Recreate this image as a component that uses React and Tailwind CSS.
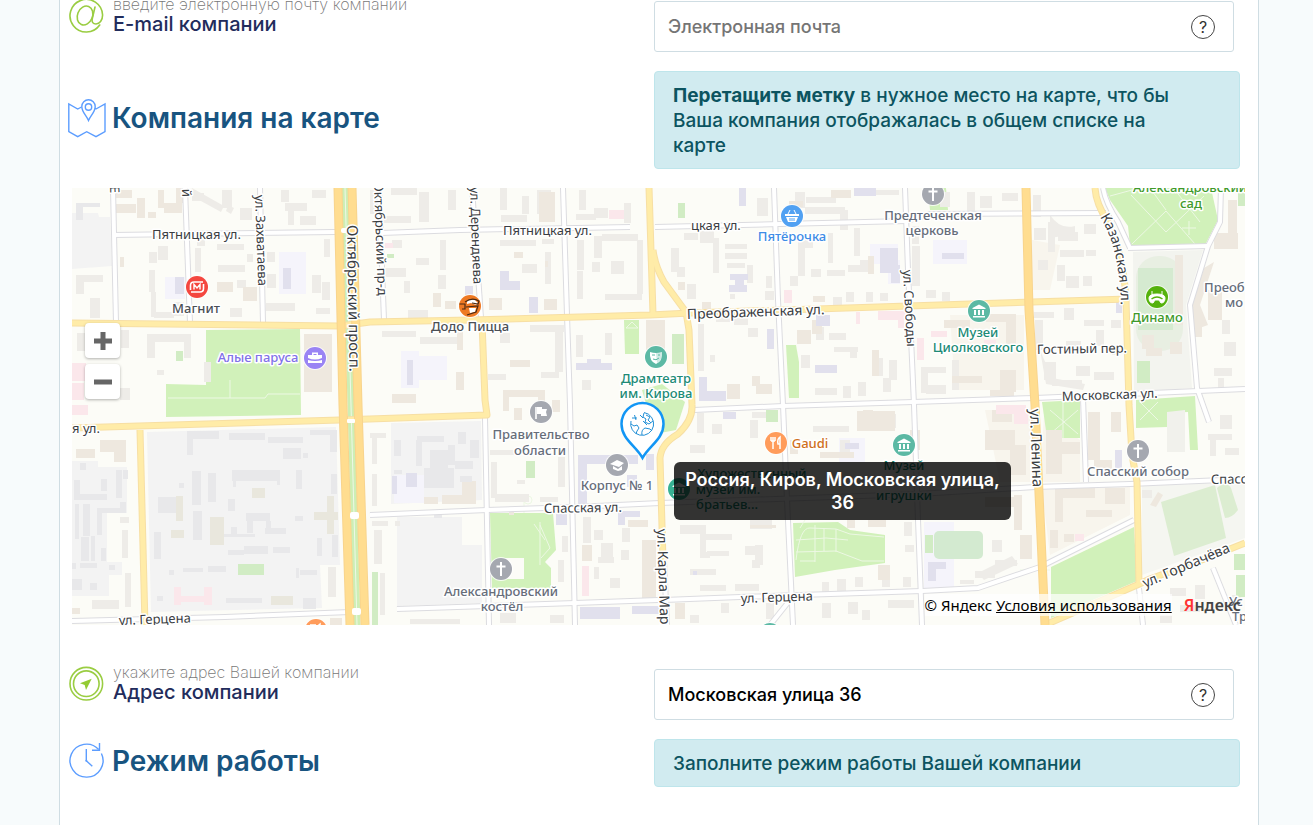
import { useState } from 'react';

// [x, y, width, height]
const greyBuildings = [
    [192, 193, 12, 8], [222, 190, 10, 18], [240, 208, 12, 12], [281, 190, 8, 12], [285, 203, 22, 8], [288, 211, 6, 14], [300, 216, 16, 9], [312, 190, 14, 8],
    [149, 252, 8, 11], [158, 246, 10, 14], [149, 270, 6, 22], [151, 292, 5, 25], [154, 312, 20, 6], [174, 302, 10, 14], [197, 234, 8, 12], [195, 248, 6, 24],
    [217, 244, 27, 6], [218, 265, 27, 7], [237, 280, 9, 8], [76, 275, 27, 7], [76, 282, 8, 12], [90, 298, 10, 20], [247, 254, 6, 8], [267, 252, 8, 10],
    [267, 274, 9, 14], [312, 275, 9, 18], [322, 282, 8, 18], [324, 239, 6, 18], [266, 303, 29, 8], [316, 308, 14, 6], [230, 308, 12, 9], [147, 334, 44, 8],
    [147, 336, 8, 22], [184, 336, 7, 22], [121, 330, 8, 18], [157, 370, 7, 5], [204, 362, 7, 20], [120, 388, 10, 12], [77, 333, 14, 18],
    [370, 190, 9, 24], [391, 188, 26, 7], [377, 216, 34, 7], [419, 192, 10, 30], [448, 190, 8, 20], [500, 188, 7, 22], [501, 215, 26, 7], [522, 196, 7, 18],
    [537, 190, 14, 24], [579, 190, 7, 20], [576, 214, 20, 6], [624, 203, 7, 20], [594, 208, 14, 10], [381, 268, 25, 9], [392, 240, 10, 8], [404, 281, 6, 12],
    [416, 258, 13, 7], [440, 240, 6, 30], [438, 275, 8, 14], [500, 240, 36, 6], [542, 239, 12, 5], [545, 252, 6, 32], [522, 264, 15, 9], [502, 284, 6, 5],
    [577, 240, 7, 30], [577, 271, 6, 28], [594, 236, 8, 22], [602, 234, 36, 7], [637, 240, 6, 54], [605, 294, 37, 6], [611, 261, 13, 13], [592, 262, 8, 10],
    [408, 310, 20, 8], [420, 337, 37, 7], [382, 331, 34, 6], [500, 333, 10, 10], [530, 325, 34, 7], [555, 330, 8, 42], [541, 372, 18, 6], [576, 335, 7, 22],
    [605, 333, 7, 22], [488, 374, 18, 6], [582, 380, 9, 10], [757, 198, 11, 18], [795, 192, 10, 16], [805, 207, 40, 7], [806, 197, 30, 6],
    [840, 210, 8, 20], [874, 190, 25, 5], [684, 233, 14, 7], [700, 231, 14, 12], [713, 238, 6, 35], [725, 244, 22, 5], [725, 253, 22, 6], [727, 263, 18, 5],
    [747, 265, 6, 18], [730, 294, 5, 5], [671, 248, 8, 24], [677, 267, 8, 10], [687, 284, 9, 15], [766, 276, 6, 12], [765, 291, 9, 9], [798, 241, 7, 35],
    [805, 240, 8, 8], [828, 233, 5, 30], [854, 228, 6, 28], [860, 260, 12, 9], [827, 270, 18, 6], [848, 265, 20, 7], [811, 269, 10, 8], [790, 276, 8, 10],
    [833, 297, 9, 9], [846, 292, 8, 10], [866, 292, 7, 10], [880, 293, 8, 8], [912, 226, 7, 18], [912, 246, 8, 40], [926, 290, 10, 8], [942, 292, 8, 9],
    [698, 324, 6, 47], [716, 314, 14, 8], [734, 318, 14, 7], [748, 328, 10, 9], [710, 355, 5, 7], [801, 355, 9, 13], [816, 327, 8, 13], [829, 333, 17, 7],
    [834, 347, 24, 5], [850, 352, 7, 6], [876, 358, 7, 18], [889, 360, 8, 20], [815, 388, 22, 7], [843, 386, 8, 12], [858, 382, 8, 14], [883, 378, 8, 14],
    [921, 367, 7, 26], [926, 367, 20, 6], [926, 385, 20, 9], [952, 360, 7, 30], [967, 192, 8, 20], [980, 196, 12, 12], [1002, 193, 16, 8], [940, 192, 10, 15],
    [1033, 195, 8, 22], [1034, 228, 12, 12], [1048, 222, 7, 30], [1058, 232, 20, 9], [1060, 250, 24, 7], [1084, 224, 12, 10], [1057, 265, 8, 16], [1083, 276, 9, 10],
    [1086, 250, 10, 6], [1038, 260, 10, 10], [1066, 276, 13, 12], [1034, 312, 20, 6], [1035, 320, 8, 30], [1064, 308, 10, 12], [1084, 320, 20, 6],
    [1096, 330, 8, 16], [1066, 341, 15, 12], [1111, 320, 10, 8], [1112, 345, 8, 10], [1044, 362, 12, 18], [1052, 380, 30, 6], [1076, 366, 14, 10], [1094, 372, 20, 8],
    [1214, 368, 18, 8], [1218, 378, 6, 14], [1224, 342, 12, 14], [1222, 320, 8, 14], [120, 517, 9, 6], [122, 530, 6, 28], [125, 573, 6, 34], [92, 600, 27, 9],
    [328, 567, 8, 30], [370, 433, 16, 5], [372, 436, 5, 28], [372, 474, 5, 32], [491, 462, 6, 36], [495, 494, 34, 8], [558, 457, 7, 30], [540, 497, 18, 5],
    [490, 450, 30, 5], [517, 480, 8, 4], [372, 521, 16, 5], [374, 530, 8, 34], [380, 573, 5, 42], [395, 521, 5, 5], [562, 536, 6, 16], [558, 560, 6, 22],
    [583, 517, 8, 26], [594, 530, 9, 10], [601, 543, 12, 14], [598, 557, 16, 6], [622, 528, 8, 14], [621, 550, 8, 10], [610, 578, 10, 10], [594, 567, 5, 12],
    [410, 619, 50, 5], [500, 613, 16, 10], [550, 615, 14, 8], [697, 413, 7, 20], [712, 424, 10, 10], [750, 420, 8, 18], [752, 412, 20, 6], [813, 426, 36, 6],
    [888, 414, 8, 14], [860, 414, 26, 6], [840, 440, 10, 14], [690, 445, 15, 8], [680, 525, 20, 9], [700, 525, 6, 30], [706, 534, 26, 6], [700, 552, 10, 6],
    [690, 569, 26, 6], [707, 551, 22, 5], [745, 546, 14, 9], [755, 545, 8, 20], [752, 560, 8, 8], [700, 585, 26, 6], [735, 584, 24, 7], [822, 582, 7, 11],
    [837, 579, 9, 14], [855, 577, 8, 10], [882, 577, 8, 10], [903, 577, 8, 10], [904, 522, 8, 14], [905, 545, 9, 7], [822, 603, 9, 15], [848, 602, 10, 12],
    [862, 610, 8, 10], [888, 600, 26, 8], [750, 520, 22, 9], [690, 615, 9, 8], [721, 603, 8, 10], [766, 603, 8, 16], [992, 540, 10, 12], [975, 571, 20, 7],
    [995, 560, 22, 6], [960, 580, 14, 4], [1208, 434, 24, 6], [1210, 440, 6, 16], [1225, 448, 14, 7], [1220, 415, 12, 14], [1150, 480, 12, 5], [1142, 490, 10, 8],
    [1150, 600, 14, 8], [1170, 588, 16, 8], [1195, 585, 10, 14], [1180, 605, 20, 7], [1160, 615, 12, 8], [1232, 595, 9, 10],
];

const tanBuildings = [
    [115, 190, 17, 8], [116, 204, 20, 9], [137, 198, 8, 20], [158, 190, 6, 18], [164, 203, 18, 10], [176, 188, 8, 15], [148, 212, 8, 6], [120, 257, 4, 10],
    [217, 282, 16, 10], [243, 287, 14, 14], [304, 334, 28, 58], [539, 192, 16, 30], [545, 261, 3, 6], [514, 252, 9, 6], [433, 293, 8, 14], [445, 301, 11, 8],
    [489, 298, 13, 12], [544, 299, 13, 11], [646, 320, 19, 33], [457, 320, 6, 30], [456, 372, 8, 18], [392, 394, 24, 9], [510, 360, 20, 7], [503, 390, 42, 7],
    [503, 397, 6, 14], [538, 397, 7, 14], [789, 201, 14, 6], [831, 190, 20, 8], [678, 282, 7, 8], [702, 302, 9, 7], [813, 296, 12, 6], [868, 256, 6, 18],
    [797, 330, 14, 14], [812, 320, 10, 14], [727, 384, 13, 15], [752, 376, 8, 10], [756, 384, 16, 10], [872, 350, 7, 26], [944, 320, 26, 8], [986, 314, 30, 8],
    [1006, 322, 10, 22], [952, 376, 30, 7], [1000, 370, 16, 22], [990, 390, 24, 6], [1175, 255, 8, 70], [1142, 335, 12, 14], [1146, 348, 16, 8], [1170, 342, 12, 12],
    [1214, 233, 24, 16], [1228, 200, 9, 40], [1208, 290, 14, 30], [1192, 315, 10, 22], [76, 449, 19, 9], [100, 440, 26, 12], [114, 446, 12, 16], [509, 510, 5, 5],
    [514, 408, 8, 12], [552, 400, 8, 12], [442, 495, 34, 9], [462, 481, 14, 15], [424, 497, 14, 7], [642, 540, 14, 60], [628, 520, 20, 7], [582, 545, 10, 16],
    [750, 525, 26, 3], [857, 411, 38, 20], [863, 410, 10, 10], [790, 440, 8, 14], [820, 452, 34, 6], [910, 430, 10, 20], [1046, 430, 16, 44], [1062, 442, 18, 12],
    [992, 410, 20, 12], [985, 430, 30, 20], [1010, 445, 16, 30], [1088, 412, 12, 48], [1094, 460, 18, 10], [1111, 412, 10, 20], [985, 497, 30, 10], [1014, 495, 8, 35],
    [1055, 488, 40, 10], [1055, 498, 8, 24], [1105, 488, 20, 16], [1050, 530, 8, 18], [1086, 510, 26, 7], [1064, 534, 10, 8], [1020, 535, 12, 24], [878, 565, 12, 15],
    [847, 520, 8, 8], [868, 520, 18, 7], [72, 608, 8, 6], [330, 618, 12, 7], [675, 603, 10, 16],
];

const darkBuildings = [
    [191, 431, 28, 8], [187, 431, 6, 24], [229, 433, 36, 7], [268, 437, 35, 6], [283, 448, 18, 11], [303, 453, 5, 5], [310, 430, 22, 5], [330, 430, 7, 22],
    [192, 471, 9, 34], [208, 473, 8, 29], [232, 470, 48, 11], [233, 481, 3, 6], [277, 481, 3, 4], [296, 470, 6, 19], [179, 483, 5, 5], [228, 499, 7, 12],
    [158, 497, 19, 16], [193, 511, 9, 29], [246, 513, 24, 8], [247, 521, 6, 12], [266, 521, 5, 12], [265, 528, 21, 6], [220, 534, 35, 3], [231, 527, 6, 9],
    [228, 550, 16, 5], [244, 546, 24, 8], [273, 547, 17, 6], [295, 516, 8, 5], [154, 532, 7, 27], [183, 568, 20, 4], [208, 566, 18, 6], [169, 570, 5, 5],
    [296, 568, 3, 10], [300, 570, 17, 5], [226, 598, 36, 5], [271, 596, 22, 9], [303, 598, 13, 11], [157, 596, 6, 5], [317, 538, 5, 18], [332, 535, 6, 22],
    [331, 474, 6, 20], [80, 463, 6, 7], [74, 480, 6, 20], [101, 479, 6, 12], [116, 470, 6, 28], [123, 470, 5, 9], [80, 494, 27, 6], [75, 504, 4, 35],
    [83, 504, 7, 32], [97, 510, 5, 25], [97, 508, 29, 5], [120, 502, 6, 9], [81, 537, 8, 24], [91, 536, 4, 25], [101, 548, 5, 13], [80, 563, 17, 5],
    [72, 579, 10, 11], [90, 583, 7, 7], [109, 565, 6, 5], [72, 563, 4, 6], [417, 436, 27, 6], [416, 440, 6, 26], [430, 450, 18, 26], [424, 468, 30, 20],
    [448, 445, 7, 20], [455, 461, 18, 8], [458, 432, 8, 12], [470, 440, 9, 18], [394, 440, 7, 16], [394, 470, 8, 4], [460, 476, 12, 6],
    [428, 510, 4, 4], [434, 512, 8, 6], [76, 203, 24, 4], [76, 206, 7, 14],
];

const oliveBuildings = [[176, 496, 7, 25], [171, 530, 13, 8], [210, 517, 14, 28], [252, 488, 13, 10], [314, 512, 24, 8], [327, 496, 7, 38], [271, 596, 22, 9]];
const lavenderZones = [[279, 252, 27, 42], [165, 277, 20, 22], [401, 351, 18, 37], [415, 356, 32, 24], [870, 244, 28, 20], [888, 260, 12, 24], [933, 240, 34, 24], [839, 438, 26, 24], [924, 522, 30, 66], [394, 475, 30, 28]];
const lavenderBuildings = [
    [283, 268, 8, 21], [175, 277, 9, 17], [739, 188, 7, 18], [854, 188, 22, 8], [500, 271, 9, 18], [500, 281, 20, 9], [465, 286, 8, 9], [529, 297, 9, 16],
    [407, 360, 6, 25], [576, 363, 36, 7], [587, 359, 14, 6], [730, 274, 18, 6], [735, 279, 9, 8], [729, 285, 18, 7], [880, 248, 18, 25], [891, 265, 9, 18],
    [942, 253, 22, 6], [816, 315, 14, 11], [767, 329, 7, 20], [815, 365, 22, 8], [699, 377, 8, 24], [700, 391, 26, 10], [1116, 302, 6, 11], [723, 412, 13, 7],
    [845, 443, 14, 6], [578, 456, 9, 50], [578, 455, 60, 9], [646, 454, 8, 16], [627, 475, 10, 12], [406, 473, 11, 14], [392, 476, 5, 18], [556, 514, 11, 11],
    [618, 511, 22, 6], [618, 516, 7, 9], [580, 607, 40, 12], [632, 606, 28, 8], [928, 562, 18, 7], [928, 568, 8, 13], [693, 571, 4, 4], [1115, 450, 7, 18],
];
const pinkBuildings = [[609, 210, 15, 9], [385, 243, 8, 5], [784, 290, 8, 13], [856, 312, 4, 12], [878, 311, 28, 9], [898, 318, 6, 10], [917, 338, 7, 22], [931, 331, 16, 6], [72, 363, 14, 18], [72, 383, 12, 17], [72, 405, 16, 10], [174, 587, 7, 18], [181, 596, 26, 6], [204, 587, 8, 18], [582, 566, 7, 30], [996, 405, 30, 9], [1014, 412, 14, 12], [1075, 534, 9, 7], [984, 340, 12, 6]];
const smallGreens = [[176, 351, 7, 10], [238, 564, 26, 11], [387, 254, 7, 4], [678, 203, 7, 15], [672, 334, 12, 30], [526, 461, 9, 17], [766, 410, 12, 12], [925, 535, 8, 18], [1137, 361, 13, 22], [1238, 188, 7, 18], [372, 572, 6, 53], [1234, 554, 11, 16], [1236, 575, 9, 22]];

const yellowRoads = [
    'M72 323L340 326L370 322L470 320L650 315L690 313L970 304L1128 299',
    'M72 428L105 427L340 420L487 415L485 400L482 322',
    'M140 430L145 625',
    'M649 188L653 314',
    'M653 250Q655 266 664 282L686 312L689 330L692 405Q693 420 678 434Q661 444 660 458L663 560',
    'M1095 188Q1096 204 1108 222Q1124 256 1126 300L1129 405L1132 455L1137 482L1139 585',
    'M1245 543L1210 557L1150 579L1137 585L1045 625',
];

const whiteRoads = [
    'M113 188L116 323', 'M185 188L190 323', 'M260 188L263 323', 'M113 235L335 232', 'M382 233L460 230L630 227', 'M655 227L780 224L907 221L930 214L1106 213',
    'M379 188L384 320', 'M472 188L481 318', 'M563 188L567 315L570 405L575 625', 'M774 188L778 300L783 405L787 500L793 625', 'M905 188L908 270L914 405L918 520L922 625',
    'M694 410L783 406L913 402L1035 398L1245 389', 'M370 515L487 510L575 507L660 503L918 494L1035 487L1130 484L1245 479', 'M72 621L225 617L350 612', 'M397 609L575 603L658 600',
    'M664 600L740 597L922 591L978 588L1040 567L1134 520', 'M485 418L487 522L489 625', 'M1083 398L1086 482', 'M1221 188L1220 222L1208 246L1190 305L1197 388L1209 422',
    'M1128 248L1208 246', 'M1103 188Q1106 204 1118 222L1130 248', 'M1213 568L1236 625', 'M1139 588L1143 625', 'M664 560L667 625', 'M770 625L790 600',
];

const orangeRoads = ['M338 188L343 405L350 625', 'M352 188L358 405L365 625', 'M1026 188L1029 310L1035 405L1045 625'];

const parks = [
    'M206 330L300 329L301 415L166 417V384L206 385Z',
    'M1105 188H1211L1218 220L1205 245L1130 246L1128 226L1110 200Z',
    'M490 513H553L556 550L545 562L551 568V588L492 588Z',
    'M793 523L838 522L850 530L885 535V563L835 570L795 577Z',
    'M1051 567L1134 527L1137 581L1051 618Z',
    'M1042 402L1080 400V438H1047Z',
    'M1136 400L1195 396L1198 450H1190L1188 412L1167 413V427L1136 428Z',
    'M624 320H639V354H625Z',
    'M786 345H796L799 362V398H789Z',
    'M642 390L662 384L685 402L676 430L655 434Z',
    'M928 188H946L948 210H930Z',
];

const parkPaths = 'M168 398H230V380M230 398H265L268 394H300M1110 196L1132 190M1131 195L1166 232L1204 196M1132 244L1166 211L1195 244M1175 190L1200 222M1182 228H1196M1189 221V235M1150 188L1166 210M540 522V565M540 525L550 548L541 558M524 500V513M534 524L545 540M800 528L805 520M796 560Q800 527 810 528L836 529L850 534L884 537M796 540L826 538L848 540M796 552L836 551L862 561H884M815 525V562M824 528V551M836 529V552M800 561H815M1050 410L1078 434M1078 410L1050 434M1063 402V438M1140 402L1158 420M1158 402L1140 420M626 328L632 322L638 328M626 328H638M1020 570H1050';

// [text, x, y, angle, size]
const streetLabels = [
    ['Пятницкая ул.', 152, 239, 0, 13], ['Пятницкая ул.', 503, 235, 0, 13], ['цкая ул.', 691, 230, 0, 13], ['Преображенская ул.', 687, 319, -2, 14],
    ['Гостиный пер.', 1037, 354, -1, 13], ['Московская ул.', 1062, 401, -2, 13], ['я ул.', 72, 433, 0, 13], ['Спасская ул.', 544, 513, -1, 13],
    ['ул. Герцена', 119, 625, -2, 13], ['ул. Герцена', 741, 603, -2, 13], ['Спасс', 1211, 484, -1, 13], ['ул. Горбачёва', 1145, 588, -23, 14],
    ['ул. Захватаева', 255, 195, 88, 13], ['Октябрьский просп.', 347, 225, 89, 15], ['Октябрьский пр-д', 374, 182, 88, 13], ['ул. Дерендяева', 470, 187, 88, 13],
    ['ул. Свободы', 903, 270, 87, 13], ['ул. Ленина', 1030, 409, 88, 15], ['ул. Карла Маркса', 657, 529, 88, 14], ['й', 182, 189, 88, 13], ['Е', 110, 186, 88, 13],
];

// [text, x, y, color]
const placeLabels = [
    ['Магнит', 196, 313, '#4b4f55'], ['Додо Пицца', 470, 331, '#4b4f55'], ['Алые паруса', 258, 362, '#8171e8'], ['Пятёрочка', 792, 241, '#3e8ce6'],
    ['Предтеченская', 933, 220, '#666d7a'], ['церковь', 932, 235, '#666d7a'], ['Александровский', 1190, 192, '#3f9a2b'], ['сад', 1191, 208, '#3f9a2b'],
    ['Динамо', 1157, 322, '#3f9a2b'], ['Музей', 978, 337, '#208a75'], ['Циолковского', 978, 352, '#208a75'], ['Драмтеатр', 656, 383, '#208a75'],
    ['им. Кирова', 656, 398, '#208a75'], ['Правительство', 541, 439, '#666d7a'], ['области', 540, 455, '#666d7a'], ['Корпус № 1', 617, 490, '#666d7a'],
    ['Александровский', 501, 596, '#666d7a'], ['костёл', 502, 611, '#666d7a'], ['Gaudi', 810, 448, '#cf6f21'], ['Музей', 904, 470, '#208a75'],
    ['игрушки', 904, 500, '#208a75'], ['Спасский собор', 1138, 476, '#666d7a'], ['Художественный', 752, 478, '#208a75'], ['музей им.', 728, 494, '#208a75'],
    ['братьев...', 727, 509, '#208a75'],
];

function Rects({ items, fill }) {
    return (
        <g fill={fill}>
            {items.map(([x, y, w, h], i) => <rect key={i} x={x} y={y} width={w} height={h} />)}
        </g>
    );
}

function Roads({ items, casing, fill, width }) {
    return (
        <g fill="none" strokeLinejoin="round">
            {items.map((d) => <path key={d} d={d} stroke={casing} strokeWidth={width + 2} />)}
            {items.map((d) => <path key={d + 'f'} d={d} stroke={fill} strokeWidth={width} />)}
        </g>
    );
}

function Poi({ x, y, color, children }) {
    return (
        <g transform={`translate(${x} ${y})`}>
            <circle r="12" fill="#fff" opacity="0.8" />
            <circle r="11" fill={color} />
            {children}
        </g>
    );
}

function Cross() {
    return <path d="M0 -7V7M-4.5 -2.5H4.5" stroke="#fff" strokeWidth="2" />;
}

function Museum() {
    return <path d="M-6.5 -3L0 -6.5L6.5 -3V-2H-6.5ZM-5 -1H-3V4H-5ZM-1 -1H1V4H-1ZM3 -1H5V4H3ZM-6 5H6V6.5H-6Z" fill="#fff" />;
}

function Fork() {
    return <path d="M-5 -6V-2M-3 -6V-2M-3 -2V6M-1 -6V-2M-5 -2H-1M4 6V-6Q1 -4 2 1H4" stroke="#fff" strokeWidth="1.5" fill="none" />;
}

function MapDrawing() {
    return (
        <svg viewBox="72 188 1173 437" preserveAspectRatio="xMidYMid slice" className="block h-full w-full" role="img" aria-label="Карта">
            <rect x="72" y="188" width="1173" height="437" fill="#fcfcf7" />
            <g fill="#f3f3f3">
                <path d="M72 213H98L99 217H110L112 266L72 269Z" />
                <path d="M147 432L336 427L340 565H320L322 608L151 612Z" />
                <path d="M72 461H98V467H127V513H107V562H122V575H109V596H72Z" />
                <path d="M391 423L481 421L482 500L391 504Z" />
                <path d="M397 517H462V545H482V603L397 606Z" />
            </g>
            <path d="M1133 252L1203 250L1186 305L1192 388L1134 393Z" fill="#f3f4ef" />
            <path d="M1142 486L1245 482V538L1142 575Z" fill="#f5f6f1" />
            <path d="M1032 240L1060 245L1050 290H1032ZM950 315H1024V390H955ZM1044 415L1080 440V482H1040ZM985 410H1030V482H1000ZM1042 490L1130 486V515L1050 555Z" fill="#f8f5ed" />
            <g fill="#d1f1ba">{parks.map((d) => <path key={d} d={d} />)}</g>
            <rect x="1136" y="256" width="47" height="95" rx="22" fill="#e8efe2" />
            <rect x="1138" y="268" width="35" height="62" fill="#d5ead0" />
            <path d={parkPaths} fill="none" stroke="#edf8e4" strokeWidth="1" />
            <circle cx="528" cy="500" r="4" fill="none" stroke="#edf8e4" />
            <Rects items={lavenderZones} fill="#f5f4fb" />
            <Rects items={greyBuildings} fill="#eeece8" />
            <Rects items={tanBuildings} fill="#eee8df" />
            <Rects items={darkBuildings} fill="#e8e8ea" />
            <Rects items={oliveBuildings} fill="#e9e7dd" />
            <Rects items={lavenderBuildings} fill="#e1e0ed" />
            <Rects items={pinkBuildings} fill="#fbe7eb" />
            <Rects items={smallGreens} fill="#d1ecc4" />
            <rect x="934" y="531" width="49" height="28" rx="5" fill="#d3ead0" />
            <path d="M1161 502L1215 485L1226 538L1174 556Z" fill="#dcedd1" />
            <path d="M1217 488Q1226 480 1231 488L1238 510Q1232 518 1225 518Z" fill="#dcedd1" />
            <g fill="#eeece8">
                <path d="M192 188L224 206L221 212L190 195Z" />
                <path d="M228 205L234 208L231 214L226 211Z" />
                <path d="M1050 215Q1060 230 1075 226V234L1050 238ZM1040 350L1052 378L1085 384L1083 390L1046 384Z" />
                <path d="M1214 262L1200 305L1208 325L1194 330L1192 306L1204 268Z" fill="#eee8df" />
                <path d="M978 573L1012 556L1018 564L984 580Z" />
                <path d="M1150 505L1158 492L1163 495L1156 507Z" fill="#eee8df" />
            </g>
            <path d="M502 558H524V579H502Z" fill="#fcfcf7" />
            <path d="M1167 412L1185 410V452H1167Z" fill="#f1f1ec" />

            <path d="M345 188L351 405L357 625" fill="none" stroke="#cdeeb5" strokeWidth="7" />
            <path d="M345 188L351 405L357 625" fill="none" stroke="#eef8e6" strokeWidth="1" />
            <Roads items={whiteRoads} casing="#dcdce0" fill="#ffffff" width={4} />
            <Roads items={yellowRoads} casing="#f7dfa4" fill="#ffeca8" width={5} />
            <Roads items={orangeRoads} casing="#f8d48d" fill="#ffdd90" width={7} />
            <g fill="#fff">
                <rect x="341" y="228" width="8" height="5" rx="2" />
                <rect x="350" y="512" width="9" height="7" rx="2" />
                <rect x="352" y="608" width="9" height="7" rx="2" />
                <rect x="347" y="419" width="8" height="4" rx="1" />
            </g>

            <g fontFamily='"Noto Sans", "Open Sans", sans-serif' fill="#3a3d42" stroke="#fff" strokeWidth="3" strokeLinejoin="round" paintOrder="stroke">
                {streetLabels.map(([text, x, y, angle, size]) => (
                    <text key={`${text}${x}`} fontSize={size} transform={`translate(${x} ${y}) rotate(${angle})`}>{text}</text>
                ))}
                <path id="kazanskaya" d="M1100 217Q1120 248 1121 308" fill="none" stroke="none" />
                <text fontSize="14"><textPath href="#kazanskaya">Казанская ул.</textPath></text>
            </g>

            <Poi x={197} y={287} color="#f4473f">
                <path d="M-6.5 3V-1.5Q-6.5 -5 -3 -5H6M6.5 -3V1.5Q6.5 5 3 5H-6" fill="none" stroke="#fff" strokeWidth="1.6" />
                <path d="M-3 2.5V-2.5L0 1L3 -2.5V2.5" fill="none" stroke="#fff" strokeWidth="1.4" />
            </Poi>
            <Poi x={470} y={306} color="#ee7a24">
                <path d="M-3 -6L5 -6L8 -3L6 -1L1 -3L-3 -2ZM-1 2L6 2L5 6L0 7Z" fill="#fff" />
                <path d="M-10.5 -2H-5V3H-8M-5 -4Q2 -9 9 -5L8 -2L2 -3M-4 1L8 0L6 6L0 8L-3 9" fill="none" stroke="#4a2812" strokeWidth="1.2" />
            </Poi>
            <Poi x={315} y={358} color="#9a84f4">
                <path d="M-7 -3H7V0Q0 3 -7 0ZM-7 2Q0 4 7 2V5H-7ZM-3 -3V-5.5H3V-3H1.5V-4H-1.5V-3Z" fill="#fff" />
            </Poi>
            <Poi x={792} y={216} color="#51a1f2">
                <path d="M-7 -2H7V0H-7ZM-6 1H6L4 6H-4Z" fill="#fff" />
                <path d="M-4 -2L-2 -6M4 -2L2 -6" stroke="#fff" />
                <path d="M-2 2V5M0 2V5M2 2V5" stroke="#51a1f2" />
            </Poi>
            <Poi x={933} y={194} color="#a5a8b0"><Cross /></Poi>
            <Poi x={501} y={569} color="#a5a8b0"><Cross /></Poi>
            <Poi x={1138} y={451} color="#a5a8b0"><Cross /></Poi>
            <Poi x={979} y={311} color="#5cb9a4"><Museum /></Poi>
            <Poi x={904} y={445} color="#5cb9a4"><Museum /></Poi>
            <Poi x={679} y={489} color="#38b193"><Museum /></Poi>
            <Poi x={770} y={634} color="#5cb9a4" />
            <Poi x={776} y={443} color="#ff9c5b"><Fork /></Poi>
            <Poi x={316} y={630} color="#ff9c5b"><Fork /></Poi>
            <Poi x={656} y={357} color="#5cb9a4">
                <path d="M-6 -5Q0 -3 6 -5Q7 4 0 7Q-7 4 -6 -5Z" fill="#fff" />
                <path d="M-4 -2H-1M2 -2H4M-3 2Q0 4 3 1" stroke="#5cb9a4" fill="none" />
                <path d="M0 -4Q3 -4 6 -5Q7 3 1 6Z" fill="#5cb9a4" opacity="0.3" />
            </Poi>
            <Poi x={541} y={412} color="#a5a8b0">
                <path d="M-5 -5V7" stroke="#fff" strokeWidth="1.6" />
                <path d="M-4 -5H1V-3H6L5 0L6 4H0V2H-4Z" fill="#fff" />
            </Poi>
            <Poi x={617} y={465} color="#a5a8b0">
                <path d="M-7 -1L0 -5L7 -2L2 2ZM-4 1L1 4L5 1V5L1 6L-4 4Z" fill="#fff" />
            </Poi>
            <Poi x={1157} y={297} color="#55b20d">
                <path d="M-8 1Q-8 -3 0 -3Q8 -3 8 1Q8 6 4 6L2 3H-2L-4 6Q-8 6 -8 1ZM-5 -6V-3M5 -6V-3" fill="#fff" stroke="#fff" />
                <path d="M-5.5 2Q0 -2 5.5 2" stroke="#55b20d" strokeWidth="1.5" fill="none" />
            </Poi>

            <g fontFamily='"Noto Sans", "Open Sans", sans-serif' fontSize="13" fontWeight="500" textAnchor="middle" stroke="#fff" strokeWidth="3" strokeLinejoin="round" paintOrder="stroke">
                {placeLabels.map(([text, x, y, color]) => (
                    <text key={`${text}${y}`} x={x} y={y} fill={color}>{text}</text>
                ))}
                <g textAnchor="start" fill="#666d7a">
                    <text x="1204" y="292">Преоб</text>
                    <text x="1225" y="307">мо</text>
                    <text x="1229" y="606">Ус</text>
                    <text x="1232" y="621">Тр</text>
                </g>
            </g>

            <path d="M642.5 458C636 446 621.5 439 621.5 424A21 21 0 0 1 663.5 424C663.5 439 649 446 642.5 458Z" fill="#fff" stroke="#1296f5" strokeWidth="2.5" />
            <g transform="translate(642 424)" fill="none" stroke="#218fd6" strokeWidth="1">
                <path d="M2 -11.5A11.5 11.5 0 1 1 -11 -3M-10 -6H-5M-7.5 -9L-6 -4M-11 0L-8 2L-5 1L-3 4L-5 7L-6 10M0 11Q-1 6 3 4L8 5L10 7M2 -11L1 -7L4 -5L3 -2L7 0L11 -3M4 -9L8 -7L6 -4L9 -1M-2 -9L1 -6M1 -3L5 1" />
            </g>
        </svg>
    );
}

function MailIcon() {
    return (
        <svg width="38" height="36" viewBox="0 0 38 36" fill="none" stroke="#9acd42" strokeWidth="1.6" strokeLinecap="round">
            <path d="M31.7 27A16.3 16.3 0 1 1 34.6 17C34.6 22.5 31.5 26 28 26C24.8 26 23.7 24 24.2 21L27 9" />
            <ellipse cx="17" cy="17.5" rx="7.5" ry="9.8" transform="rotate(22 17 17.5)" />
        </svg>
    );
}

function AddressIcon() {
    return (
        <svg width="38" height="36" viewBox="0 0 38 36" fill="none" stroke="#9acd42" strokeWidth="1.6">
            <circle cx="18.3" cy="17.7" r="16.3" />
            <circle cx="18.3" cy="17.7" r="12.8" />
            <path d="M23.7 12.7L12 17.3L16.7 19L18 24Z" fill="#94cb33" stroke="none" />
        </svg>
    );
}

function MapIcon() {
    return (
        <svg width="38" height="40" viewBox="0 0 38 40" fill="none" stroke="#5c9dff" strokeWidth="1.4">
            <path d="M13.5 9L9.7 11L0.8 6V33.7L9.7 38.6L18.7 33.7L28 38.6L37 33.7V6L28 11L27 10" />
            <path d="M20.5 22.5C18 17 13.8 14 13.8 8.5A6.7 6.7 0 0 1 27.2 8.5C27.2 14 23 17 20.5 22.5Z" />
            <circle cx="20.5" cy="9" r="3.2" />
        </svg>
    );
}

function ClockIcon() {
    return (
        <svg width="38" height="38" viewBox="0 0 38 38" fill="none" stroke="#5c9dff" strokeWidth="1.4">
            <path d="M33.4 11.5A16.5 16.5 0 1 1 30.7 7.5" />
            <path d="M31.5 1V8.3H24M18.3 7V18.7L24.3 24.3" />
            <circle cx="18.3" cy="18.7" r="1" fill="#5c9dff" stroke="none" />
        </svg>
    );
}

function Field({ id, icon, hint, label, value, placeholder, onChange }) {
    return (
        <div className="grid grid-cols-2 pr-[18px] pl-2">
            <label htmlFor={id} className="flex items-start pt-0.5">
                <span className="w-[45px] shrink-0 pt-1">{icon}</span>
                <span className="flex flex-col">
                    <span className="text-base leading-5 font-extralight text-[#777]">{hint}</span>
                    <span className="text-xl leading-5 font-medium text-[#222c5c]">{label}</span>
                </span>
            </label>
            <div className="mt-[9px] mr-1.5 flex h-[51px] items-center rounded-[3px] border border-[#cfdde3] bg-white pr-[18px] pl-[13px]">
                <input
                    id={id}
                    type="text"
                    value={value}
                    placeholder={placeholder}
                    onChange={onChange}
                    className="min-w-0 flex-1 text-lg font-medium text-black outline-none placeholder:text-[#757575]"
                />
                <button type="button" aria-label="Подсказка" className="flex size-6 items-center justify-center rounded-full border border-[#444] text-base leading-none text-[#333]">?</button>
            </div>
        </div>
    );
}

function SectionHeader({ icon, title, children }) {
    return (
        <div className="mt-[19px] grid grid-cols-2 items-center pr-[18px] pl-2">
            <div className="flex items-center pb-1">
                <span className="w-11 shrink-0">{icon}</span>
                <h2 className="text-[28px] leading-9 font-semibold text-[#185480]">{title}</h2>
            </div>
            <div className="rounded border border-[#bee5eb] bg-[#d1ebf0] pt-[11px] pr-12 pb-2.5 pl-[18px] text-[19px] leading-[25px] font-medium text-[#0c5460]">{children}</div>
        </div>
    );
}

export default function App() {
    const [email, setEmail] = useState('');
    const [address, setAddress] = useState('Московская улица 36');

    return (
        <div className="min-h-screen overflow-hidden bg-[#f7fbfc] pr-[54px] pl-[59px] font-[Inter,sans-serif]">
            <main className="flow-root min-h-screen border-x border-[#cfdde3] bg-white">
                <div className="-mt-2">
                    <Field id="email" icon={<MailIcon />} hint="введите электронную почту компании" label="E-mail компании" placeholder="Электронная почта" value={email} onChange={(e) => setEmail(e.target.value)} />
                </div>

                <SectionHeader icon={<MapIcon />} title="Компания на карте">
                    <strong className="font-bold">Перетащите метку</strong> в нужное место на карте, что бы Ваша компания отображалась в общем списке на карте
                </SectionHeader>

                <section className="relative mt-[19px] mr-[13px] ml-3 h-[437px] overflow-hidden">
                    <MapDrawing />
                    <div className="absolute top-[135px] left-[13px] flex flex-col gap-1.5">
                        <button type="button" aria-label="Приблизить" className="flex size-[35px] items-center justify-center rounded bg-white shadow-[0_1px_3px_rgba(0,0,0,0.3)]">
                            <svg width="18" height="18" viewBox="0 0 18 18" stroke="#666" strokeWidth="5"><path d="M9 0V18M0 9H18" /></svg>
                        </button>
                        <button type="button" aria-label="Отдалить" className="flex size-[35px] items-center justify-center rounded bg-white shadow-[0_1px_3px_rgba(0,0,0,0.3)]">
                            <svg width="18" height="18" viewBox="0 0 18 18" stroke="#666" strokeWidth="5"><path d="M0 9H18" /></svg>
                        </button>
                    </div>
                    <div className="absolute top-[274px] left-[602px] w-[337px] rounded-md bg-black/80 px-2 py-1.5 text-center text-lg leading-[23px] font-semibold text-white">
                        Россия, Киров, Московская улица, 36
                    </div>
                    <div className="absolute right-1 bottom-2 flex items-center gap-3 font-['Noto_Sans','Open_Sans',sans-serif] text-[15px] text-black">
                        <span className="bg-white/70">© Яндекс <a href="#terms" className="underline">Условия использования</a></span>
                        <span className="text-base font-semibold text-[#444]"><span className="text-[#f33]">Я</span>ндекс</span>
                    </div>
                </section>

                <div className="mt-[35px]">
                    <Field id="address" icon={<AddressIcon />} hint="укажите адрес Вашей компании" label="Адрес компании" value={address} onChange={(e) => setAddress(e.target.value)} />
                </div>

                <SectionHeader icon={<ClockIcon />} title="Режим работы">
                    Заполните режим работы Вашей компании
                </SectionHeader>
            </main>
        </div>
    );
}
